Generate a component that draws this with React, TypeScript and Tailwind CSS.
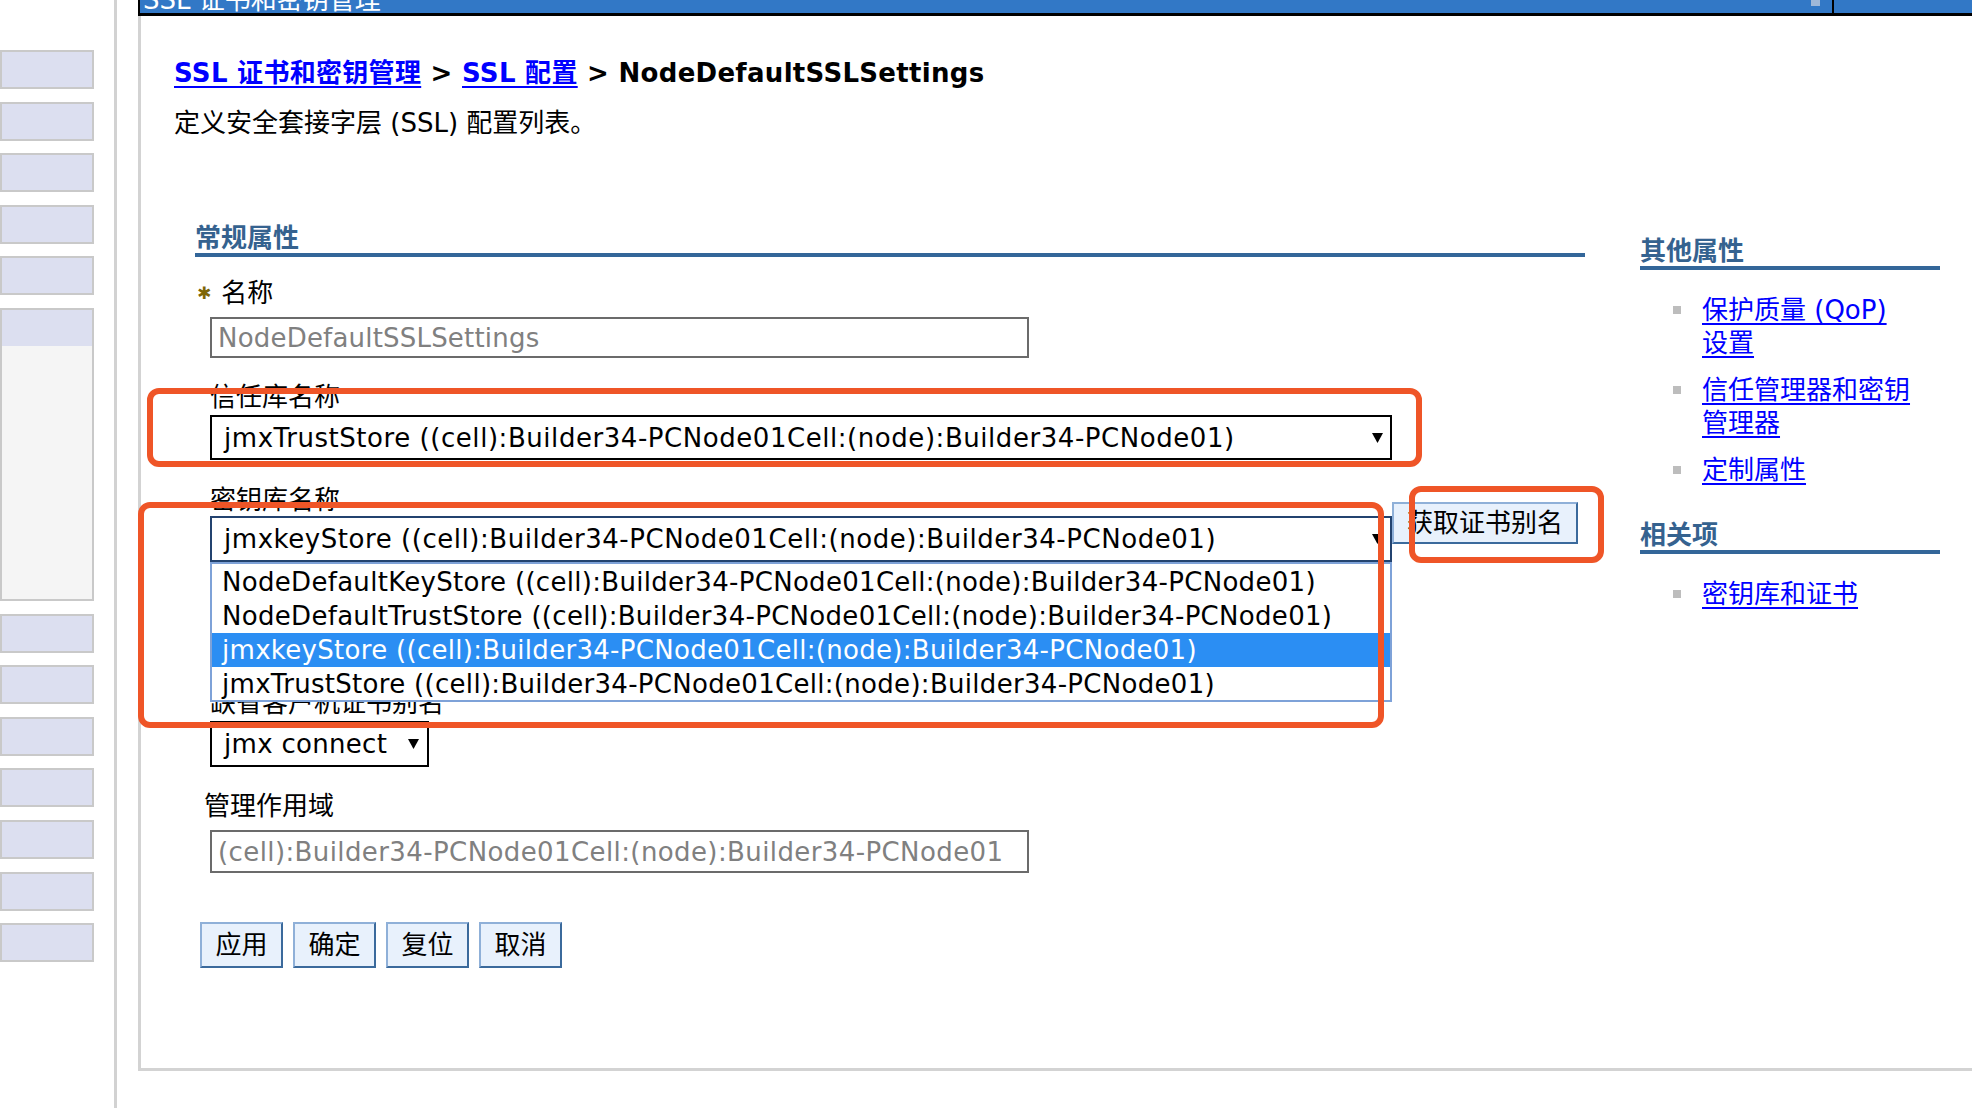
import React from "react";

const sideTops = [0, 1, 2, 3, 4];
const sideBottoms = [0, 1, 2, 3, 4, 5, 6];

const storeItems = [
  "NodeDefaultKeyStore ((cell):Builder34-PCNode01Cell:(node):Builder34-PCNode01)",
  "NodeDefaultTrustStore ((cell):Builder34-PCNode01Cell:(node):Builder34-PCNode01)",
  "jmxkeyStore ((cell):Builder34-PCNode01Cell:(node):Builder34-PCNode01)",
  "jmxTrustStore ((cell):Builder34-PCNode01Cell:(node):Builder34-PCNode01)",
];

function Arrow() {
  return (
    <svg width="11" height="12" viewBox="0 0 11 12" className="shrink-0">
      <polygon points="0,1 11,1 5.5,11" fill="#000" />
    </svg>
  );
}

function Sidebar() {
  return (
    <aside className="flex h-full w-[117px] shrink-0 border-r-[3px] border-[#d2d2d2]">
      <div className="flex w-[94px] flex-col gap-[12.6px] pt-[50px]">
        {sideTops.map((i) => (
          <div key={i} className="h-[39px] border-2 border-[#c9c9c9] bg-[#dcdff0]" />
        ))}
        <div className="flex h-[293px] flex-col border-2 border-[#c9c9c9] bg-[#f5f5f5]">
          <div className="h-[36px] bg-[#dcdff0]" />
        </div>
        {sideBottoms.map((i) => (
          <div key={i} className="h-[39px] border-2 border-[#c9c9c9] bg-[#dcdff0]" />
        ))}
      </div>
    </aside>
  );
}

function TitleBar() {
  return (
    <div className="relative h-[16px] shrink-0 overflow-hidden border-b-[3px] border-l-2 border-black bg-[#3278c6] pl-[3px]">
      <div className="-mt-[13px] whitespace-nowrap leading-[26px] text-white">SSL 证书和密钥管理</div>
      <div className="absolute left-[1671px] top-0 h-[6px] w-[9px] bg-[#9fb8d8]" />
      <div className="absolute left-[1692px] top-0 h-full w-[2px] bg-black" />
    </div>
  );
}

function Button({ children, className = "" }: { children: React.ReactNode; className?: string }) {
  return (
    <button
      className={
        "flex items-center justify-center border-2 border-b-[#3b6a9c] border-l-[#8fb0d8] border-r-[#3b6a9c] border-t-[#8fb0d8] bg-[#e8f1fc] leading-none text-black " +
        className
      }
    >
      {children}
    </button>
  );
}

function SideLink({ children }: { children: React.ReactNode }) {
  return (
    <li className="flex items-start leading-[33px]">
      <span className="ml-[33px] mt-[12px] h-[8px] w-[8px] shrink-0 bg-[#bdbdbd]" />
      <a className="ml-[21px] text-[#0000ff] underline decoration-2 underline-offset-[4px]">{children}</a>
    </li>
  );
}

function SideHeading({ children, className = "" }: { children: React.ReactNode; className?: string }) {
  return (
    <h3 className={"border-b-4 border-[#336699] font-bold leading-[30px] text-[#35628f] " + className}>{children}</h3>
  );
}

export default function App() {
  return (
    <div className="relative flex h-[1108px] w-full overflow-hidden bg-white font-['DejaVu_Sans','Noto_Sans_CJK_SC',sans-serif] text-[26px] leading-[34px] text-black">
      <Sidebar />

      <main className="ml-[21px] flex min-w-0 flex-1 flex-col">
        <TitleBar />
        <section className="h-[1055px] shrink-0 border-b-[3px] border-l-[3px] border-[#d3d3d3] pl-[33px] pt-[40px]">
          <div className="whitespace-nowrap font-bold tracking-[0.3px]">
            <a className="text-[#0000ff] underline decoration-2 underline-offset-[4px]">SSL 证书和密钥管理</a>
            <span> &gt; </span>
            <a className="text-[#0000ff] underline decoration-2 underline-offset-[4px]">SSL 配置</a>
            <span> &gt; NodeDefaultSSLSettings</span>
          </div>
          <p className="mt-[16px] whitespace-nowrap">定义安全套接字层 (SSL) 配置列表。</p>

          <div className="flex items-start">
            {/* form column */}
            <div className="ml-[21px] mt-[83px] flex w-[1390px] shrink-0 flex-col">
              <h2 className="border-b-4 border-[#336699] font-bold leading-[30px] text-[#35628f]">常规属性</h2>

              <div className="mt-[19px] flex items-center">
                <span className="ml-[2px] text-[17px] font-bold text-[#7d6608]">✱</span>
                <span className="ml-[10px]">名称</span>
              </div>
              <div className="ml-[15px] mt-[7px] flex h-[41px] w-[819px] items-center border-2 border-[#6b6b6b] pl-[6px] tracking-[0.2px] text-[#808080]">
                NodeDefaultSSLSettings
              </div>

              <label className="ml-[15px] mt-[22px]">信任库名称</label>
              <div className="ml-[15px] mt-[1px] flex h-[45px] w-[1182px] items-center justify-between whitespace-nowrap border-2 border-black pl-[12px] pr-[7px] tracking-[0.55px]">
                <span>jmxTrustStore ((cell):Builder34-PCNode01Cell:(node):Builder34-PCNode01)</span>
                <Arrow />
              </div>

              <label className="ml-[15px] mt-[23px]">密钥库名称</label>
              <div className="ml-[15px] -mt-[1px] flex items-start">
                <div className="relative">
                  <div className="flex h-[46px] w-[1182px] items-center justify-between whitespace-nowrap border-2 border-[#23436f] pl-[12px] pr-[7px] tracking-[0.55px]">
                    <span>jmxkeyStore ((cell):Builder34-PCNode01Cell:(node):Builder34-PCNode01)</span>
                    <Arrow />
                  </div>
                  <ul className="absolute left-0 top-[46px] z-10 h-[140px] w-[1182px] border-2 border-[#7ea2d8] bg-white pt-[1px] tracking-[0.3px]">
                    {storeItems.map((item, i) => (
                      <li
                        key={item}
                        className={
                          "h-[34px] whitespace-nowrap pl-[10px] leading-[34px] " +
                          (i === 2 ? "bg-[#2b8ef3] text-white" : "text-black")
                        }
                      >
                        {item}
                      </li>
                    ))}
                  </ul>
                </div>
                <Button className="-mt-[14px] h-[42px] w-[186px]">获取证书别名</Button>
              </div>

              <label className="ml-[15px] mt-[124px]">缺省客户机证书别名</label>
              <div className="ml-[15px] mt-[1px] flex h-[46px] w-[219px] items-center justify-between whitespace-nowrap border-2 border-black pl-[12px] pr-[8px] tracking-[0.3px]">
                <span>jmx connect</span>
                <Arrow />
              </div>

              <label className="ml-[9px] mt-[22px]">管理作用域</label>
              <div className="ml-[15px] mt-[7px] flex h-[43px] w-[819px] items-center whitespace-nowrap border-2 border-[#6b6b6b] pl-[6px] tracking-[0.4px] text-[#808080]">
                (cell):Builder34-PCNode01Cell:(node):Builder34-PCNode01
              </div>

              <div className="ml-[5px] mt-[49px] flex gap-[10px]">
                <Button className="h-[46px] w-[83px]">应用</Button>
                <Button className="h-[46px] w-[83px]">确定</Button>
                <Button className="h-[46px] w-[83px]">复位</Button>
                <Button className="h-[46px] w-[83px]">取消</Button>
              </div>
            </div>

            {/* right column */}
            <div className="ml-[55px] mt-[96px] w-[300px] shrink-0">
              <SideHeading>其他属性</SideHeading>
              <ul className="mt-[24px] flex flex-col gap-[14px]">
                <SideLink>
                  保护质量 (QoP)
                  <br />
                  设置
                </SideLink>
                <SideLink>
                  信任管理器和密钥
                  <br />
                  管理器
                </SideLink>
                <SideLink>定制属性</SideLink>
              </ul>
              <SideHeading className="mt-[33px]">相关项</SideHeading>
              <ul className="mt-[24px]">
                <SideLink>密钥库和证书</SideLink>
              </ul>
            </div>
          </div>
        </section>
      </main>

      {/* red annotation boxes drawn over the screenshot */}
      <div className="pointer-events-none absolute left-[147px] top-[388px] z-20 h-[79px] w-[1275px] rounded-[12px] border-[6px] border-[#ef5527]" />
      <div className="pointer-events-none absolute left-[138px] top-[502px] z-20 h-[226px] w-[1246px] rounded-[12px] border-[6px] border-[#ef5527]" />
      <div className="pointer-events-none absolute left-[1409px] top-[486px] z-20 h-[77px] w-[195px] rounded-[12px] border-[6px] border-[#ef5527]" />
    </div>
  );
}
